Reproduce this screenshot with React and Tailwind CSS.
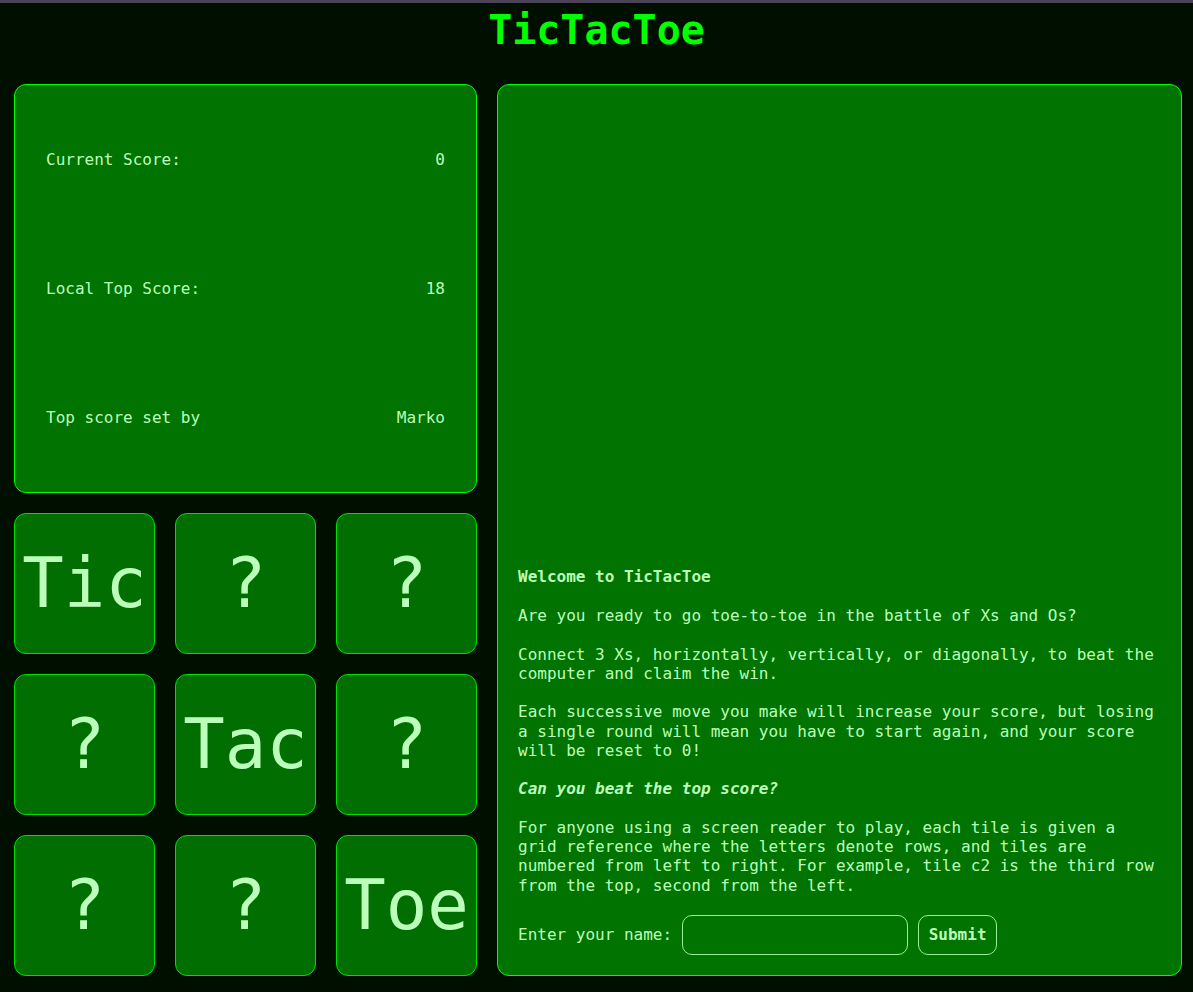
const tiles = ['Tic', '?', '?', '?', 'Tac', '?', '?', '?', 'Toe'];

const scores = [
  { label: 'Current Score:', value: '0' },
  { label: 'Local Top Score:', value: '18' },
  { label: 'Top score set by', value: 'Marko' },
];

export default function App() {
  return (
    <div className="min-h-screen bg-[#000f00] font-['DejaVu_Sans_Mono',monospace] text-[#bbffbb]">
      {/* window edge */}
      <div className="h-[3px] bg-[#4a4358]"></div>

      <h1 className="mt-[7px] h-10 text-center text-[40px] font-bold leading-10 text-[#00ff00]">
        TicTacToe
      </h1>

      <main className="mt-[34px] flex gap-5 pl-[14px] pb-4">
        {/* left column: scores + board */}
        <div className="flex w-[463px] flex-col gap-5">
          <div className="grid h-[409px] grid-rows-3 items-center rounded-xl border border-[#00ff00] bg-[#007300] px-[31px] py-[10px] text-base">
            {scores.map((s) => (
              <div key={s.label} className="flex justify-between leading-[1.2]">
                <span>{s.label}</span>
                <span>{s.value}</span>
              </div>
            ))}
          </div>

          <div className="grid grid-cols-3 gap-5">
            {tiles.map((t, i) => (
              <button
                key={i}
                className="flex h-[141px] items-center justify-center rounded-xl border border-[#00e000] bg-[#006e00] text-[69px] leading-none text-[#bbffbb]"
              >
                {t}
              </button>
            ))}
          </div>
        </div>

        {/* right column: info */}
        <div className="flex w-[685px] flex-col justify-end rounded-xl border border-[#00ff00] bg-[#007300] p-5 text-base leading-[1.205]">
          <p className="font-bold">Welcome to TicTacToe</p>
          <p className="mt-[1.205em]">Are you ready to go toe-to-toe in the battle of Xs and Os?</p>
          <p className="mt-[1.205em]">
            Connect 3 Xs, horizontally, vertically, or diagonally, to beat the computer and claim the win.
          </p>
          <p className="mt-[1.205em]">
            Each successive move you make will increase your score, but losing a single round will mean you have to
            start again, and your score will be reset to 0!
          </p>
          <p className="mt-[1.205em] font-bold italic">Can you beat the top score?</p>
          <p className="mt-[1.205em]">
            For anyone using a screen reader to play, each tile is given a grid reference where the letters denote
            rows, and tiles are numbered from left to right. For example, tile c2 is the third row from the top, second
            from the left.
          </p>

          <form className="mt-5 flex items-center gap-[10px]" onSubmit={(e) => e.preventDefault()}>
            <label htmlFor="name">Enter your name:</label>
            <input
              id="name"
              type="text"
              className="h-10 w-[226px] rounded-[10px] border border-[#99ee99] bg-transparent px-2 text-[#bbffbb] outline-none"
            />
            <button
              type="submit"
              className="h-10 w-[79px] rounded-[10px] border border-[#99ee99] bg-transparent font-bold text-[#bbffbb]"
            >
              Submit
            </button>
          </form>
        </div>
      </main>
    </div>
  );
}
